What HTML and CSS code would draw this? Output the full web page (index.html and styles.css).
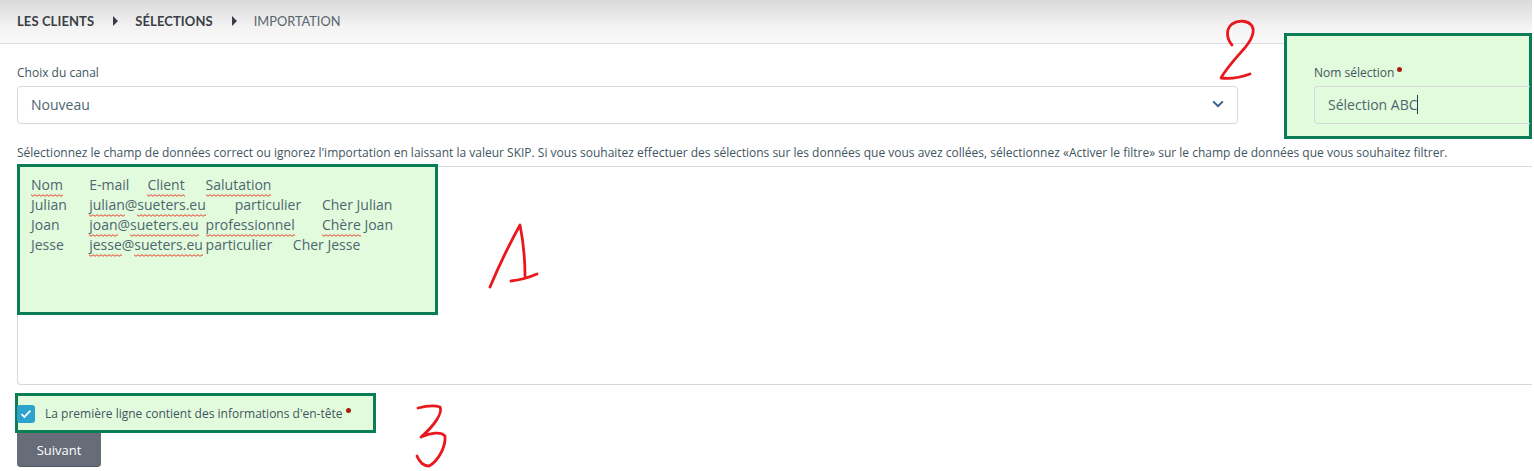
FILE: index.html
```html
<!DOCTYPE html>
<html lang="fr">
<head>
<meta charset="utf-8">
<title>Importation</title>
<link rel="stylesheet" href="styles.css">
</head>
<body>
<div class="page">
  <nav class="crumbs">
    <a class="crumb">LES CLIENTS</a>
    <span class="sep"></span>
    <a class="crumb">SÉLECTIONS</a>
    <span class="sep"></span>
    <span class="crumb current">IMPORTATION</span>
  </nav>
  <main class="form">
    <div class="row">
      <div class="field field-channel">
        <label class="label">Choix du canal</label>
        <div class="control">
          <span>Nouveau</span>
          <svg class="chev" width="12" height="8" viewBox="0 0 12 8"><path d="M1.2 1.4 6 6.2l4.8-4.8" fill="none" stroke="#2f5a86" stroke-width="1.8"/></svg>
        </div>
      </div>
      <div class="field field-name">
        <div class="mark mark-name"></div>
        <label class="label above">Nom sélection<i class="req"></i></label>
        <div class="control above"><span>Sélection ABC</span><b class="caret"></b></div>
      </div>
    </div>
    <p class="hint">Sélectionnez le champ de données correct ou ignorez l'importation en laissant la valeur SKIP. Si vous souhaitez effectuer des sélections sur les données que vous avez collées, sélectionnez «Activer le filtre» sur le champ de données que vous souhaitez filtrer.</p>
    <div class="paste">
      <div class="mark mark-paste"></div>
      <div class="paste-text above"><u>Nom</u>	E-mail	<u>Client</u>	<u>Salutation</u>
Julian	<u>julian</u>@<u>sueters.eu</u>	particulier	Cher Julian
Joan	<u>joan</u>@<u>sueters.eu</u>	<u>professionnel</u>	<u>Chère</u> Joan
Jesse	<u>jesse</u>@<u>sueters.eu</u>	particulier	Cher Jesse</div>
    </div>
    <div class="check">
      <div class="mark mark-check"></div>
      <span class="box above"><svg width="12" height="10" viewBox="0 0 12 10"><path d="M1.5 5.2 4.4 8l6-6.4" fill="none" stroke="#fff" stroke-width="1.8"/></svg></span>
      <label class="check-label above">La première ligne contient des informations d'en-tête<i class="req"></i></label>
    </div>
    <button class="next" type="button">Suivant</button>
  </main>
  <svg class="scribbles" width="1534" height="471" viewBox="0 0 1534 471">
    <path d="M1232 45C1226 38 1226 29 1232 24C1238 20 1248 20 1252 26C1256 33 1250 42 1243 50C1235 59 1226 69 1221 78C1230 79 1242 77 1250 74"/>
    <path d="M490 287C498 268 510 243 520 225C523 240 525 258 525 276M511 281C520 280 530 277 537 274"/>
    <path d="M418 408C426 406 434 405 440 407C443 413 434 426 421 437C430 433 441 431 445 436C446 448 437 462 429 466C423 466 419 461 417 456"/>
  </svg>
</div>
</body>
</html>
```
FILE: styles.css
```css
* { box-sizing: border-box; }
html, body { margin: 0; padding: 0; background: #fff; }
body { height: 471px; overflow: hidden; font-family: "Open Sans", "Noto Sans", sans-serif; color: #3f5560; }
.page { position: relative; margin-right: 2px; height: 471px; overflow: hidden; }

.crumbs { display: flex; align-items: center; height: 44px; padding-left: 17px; border-bottom: 1px solid #d9dddd; background: linear-gradient(#dadada, #f2f2f2 60%, #fbfbfb); }
.crumb { font-family: Lato, "Noto Sans", sans-serif; font-size: 13px; font-weight: 700; letter-spacing: 0.1px; color: #3a3f47; white-space: nowrap; position: relative; top: -1px; }
.crumb.current { font-size: 12.8px; font-weight: 400; color: #56646e; letter-spacing: 0; }
.sep { width: 0; height: 0; margin: 0 17px 2px 19px; border-left: 5px solid #3a3f47; border-top: 5px solid transparent; border-bottom: 5px solid transparent; }

.form { padding-left: 17px; }
.row { display: flex; gap: 76px; padding-top: 21px; }
.field { position: relative; }
.field-channel { width: 1221px; }
.field-name { flex: 1; }
.label { display: block; height: 21px; font-size: 12px; line-height: 16px; color: #3f5560; }
.control { display: flex; align-items: center; justify-content: space-between; height: 38px; padding: 0 13px 2px; border: 1px solid #d5dada; border-radius: 4px; font-size: 14px; color: #4d6670; }
.field-name .control { justify-content: flex-start; margin-right: 2px; border-right: 0; border-radius: 4px 0 0 4px; }
.chev { display: block; }
.caret { width: 1px; height: 19px; background: #1f3e5a; margin-left: -1px; }
.req { display: inline-block; width: 5px; height: 5px; margin-left: 3px; border-radius: 50%; background: #a5200c; vertical-align: 5px; }

.hint { margin: 21px 0 0; font-size: 12px; line-height: 16px; color: #3f5560; white-space: nowrap; }
.paste { position: relative; height: 219px; margin-top: 5px; padding: 8px 13px; border: 1px solid #d5dada; border-right: 0; border-radius: 4px 0 0 4px; }
.paste-text { font-size: 14px; line-height: 20px; color: #4d6670; white-space: pre; }
.paste-text u { text-decoration: none; padding-bottom: 3px; background: url("data:image/svg+xml,%3Csvg xmlns='http://www.w3.org/2000/svg' width='4' height='3'%3E%3Cpath d='M0 .7 2 2.3 4 .7' fill='none' stroke='%23e5432f' stroke-width='1'/%3E%3C/svg%3E") repeat-x left bottom; }

.check { position: relative; display: flex; align-items: center; height: 18px; margin-top: 20px; }
.box { display: flex; align-items: center; justify-content: center; width: 18px; height: 18px; border-radius: 3px; background: #2ba3cc; }
.check-label { margin-left: 10px; font-size: 12px; line-height: 16px; color: #3f5560; }

.next { display: block; width: 84px; height: 34px; margin-top: 10px; border: 0; border-bottom: 1px solid #50555f; border-radius: 0 0 4px 4px; background: #666c78; color: #fff; font-family: inherit; font-size: 13px; }

.mark { position: absolute; z-index: 1; border: 3px solid #0a7d55; background: #e2fbdc; }
.above { position: relative; z-index: 2; }
.mark-name { left: -30px; top: -32px; width: 248px; height: 106px; }
.mark-paste { left: -1px; top: -3px; width: 421px; height: 151px; }
.mark-check { left: -2px; top: -12px; width: 361px; height: 40px; }

.scribbles { position: absolute; left: 0; top: 0; z-index: 3; pointer-events: none; }
.scribbles path { fill: none; stroke: #e8181e; stroke-width: 2.8; stroke-linecap: round; stroke-linejoin: round; }
```
